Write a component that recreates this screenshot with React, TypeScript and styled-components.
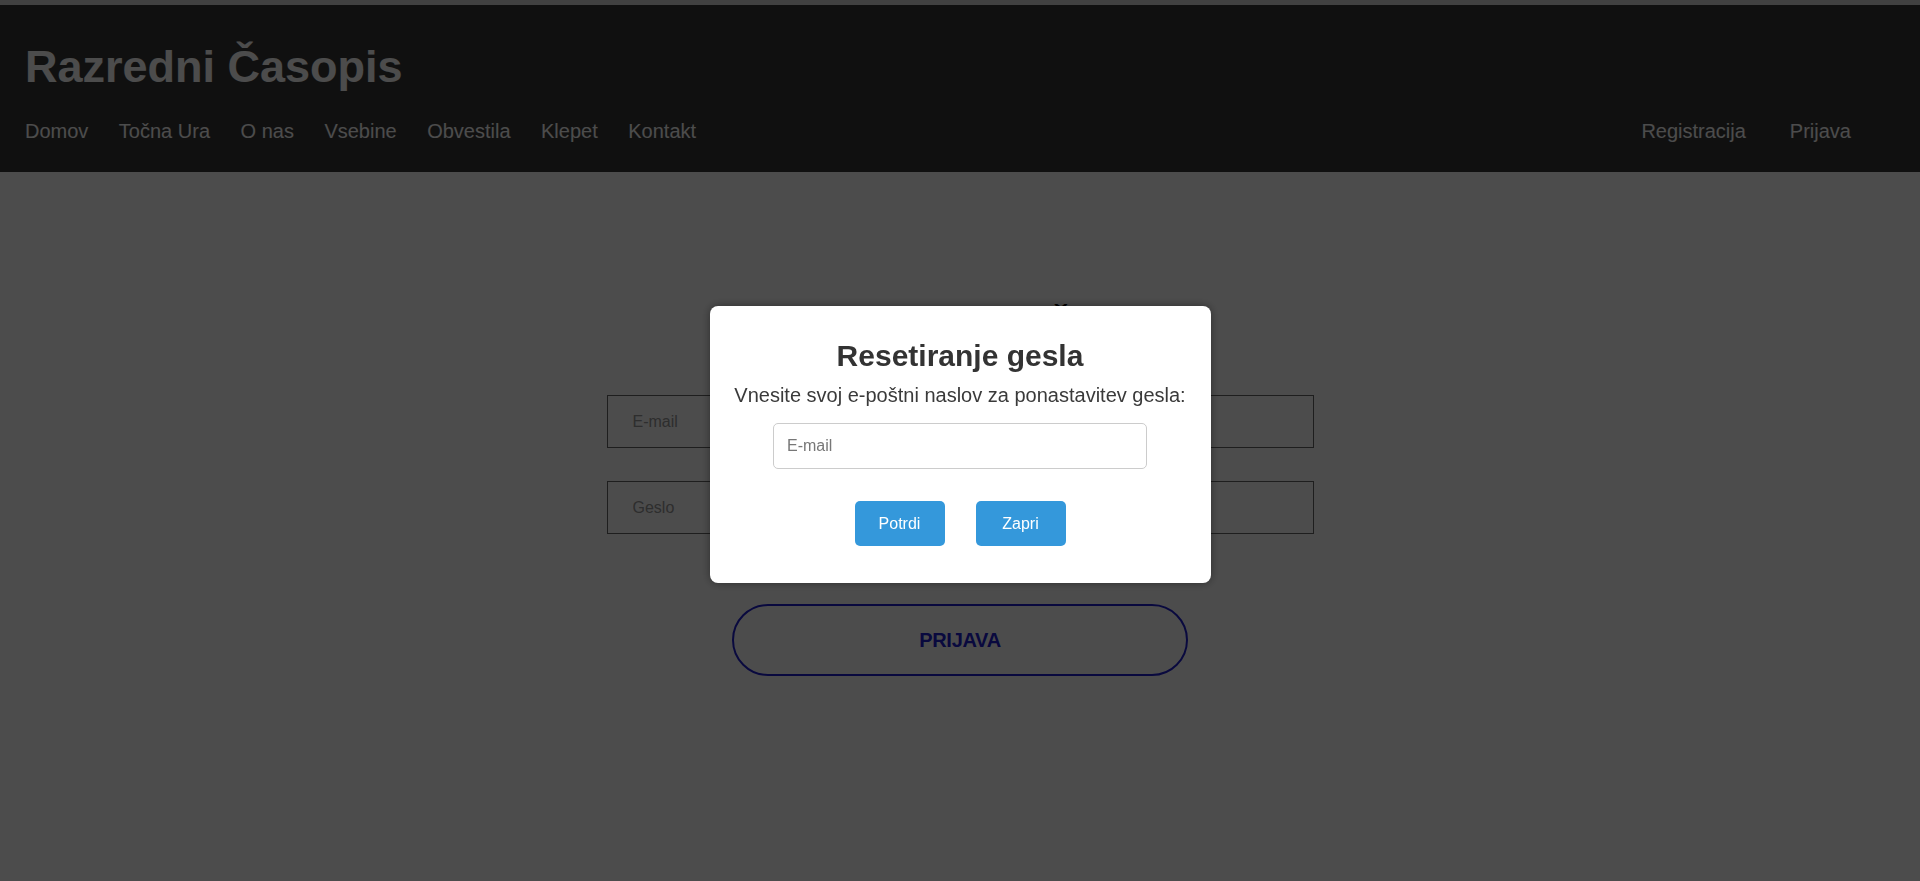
import React from "react";
import styled, { createGlobalStyle } from "styled-components";

const Global = createGlobalStyle`
  html, body { margin: 0; padding: 0; background: #ffffff; }
  body { font-family: "Liberation Sans", Arial, sans-serif; }
  * { box-sizing: border-box; }
`;

const Page = styled.div`
  min-height: 100vh;
  background: #ffffff;
`;

const Header = styled.header`
  background: #383838;
  border-top: 5px solid #d9d9d9;
  padding: 36px 69px 29px 25px;
`;

const SiteTitle = styled.h1`
  margin: 0 0 27px 0;
  font-size: 45px;
  line-height: 52px;
  font-weight: bold;
  color: #ffffff;
`;

const NavRow = styled.nav`
  display: flex;
  justify-content: space-between;
  align-items: center;
`;

const NavGroup = styled.div<{ $gap: number }>`
  display: flex;
  gap: ${(p) => p.$gap}px;
`;

const NavLink = styled.a`
  font-size: 20px;
  line-height: 23px;
  color: #ffffff;
  text-decoration: none;
`;

const Main = styled.main`
  padding-top: 138px;
  display: flex;
  flex-direction: column;
  align-items: center;
`;

const FormTitle = styled.h2`
  margin: 0 0 57px 0;
  font-size: 35px;
  line-height: 28px;
  font-weight: bold;
  color: #000000;
`;

const Form = styled.form`
  width: 707px;
  display: flex;
  flex-direction: column;
  align-items: center;
  gap: 33px;
`;

const FormInput = styled.input`
  width: 100%;
  height: 53px;
  border: 1px solid #666666;
  background: #ffffff;
  padding: 0 25px;
  font-family: "Liberation Sans", Arial, sans-serif;
  font-size: 16px;
  outline: none;
  &::placeholder { color: #999999; }
`;

const Forgot = styled.a`
  margin-top: 16px;
  font-size: 16px;
  line-height: 18px;
  color: #333333;
`;

const LoginButton = styled.button`
  margin-top: 36px;
  width: 456px;
  height: 72px;
  border: 2px solid #2020d0;
  border-radius: 36px;
  background: transparent;
  color: #2020d0;
  font-family: "Liberation Sans", Arial, sans-serif;
  font-size: 20px;
  font-weight: bold;
  letter-spacing: -0.3px;
`;

const Overlay = styled.div`
  position: fixed;
  inset: 0;
  background: rgba(0, 0, 0, 0.7);
  display: flex;
  align-items: center;
  justify-content: center;
  padding-top: 8px;
`;

const Modal = styled.div`
  width: 501px;
  background: #ffffff;
  border-radius: 8px;
  box-shadow: 0 0 10px rgba(0, 0, 0, 0.4);
  padding: 33px 20px 37px;
  display: flex;
  flex-direction: column;
  align-items: center;
  text-align: center;
`;

const ModalTitle = styled.h2`
  margin: 0;
  font-size: 30px;
  line-height: 34px;
  font-weight: bold;
  color: #333333;
`;

const ModalText = styled.p`
  margin: 11px 0 0 0;
  font-size: 20px;
  line-height: 23px;
  color: #3a3a3a;
  white-space: nowrap;
`;

const ModalInput = styled.input`
  margin-top: 16px;
  width: 374px;
  height: 46px;
  border: 1px solid #cccccc;
  border-radius: 5px;
  padding: 0 13px;
  font-family: "Liberation Sans", Arial, sans-serif;
  font-size: 16px;
  outline: none;
  &::placeholder { color: #777777; }
`;

const ButtonRow = styled.div`
  margin-top: 32px;
  display: flex;
  gap: 31px;
`;

const ModalButton = styled.button`
  width: 90px;
  height: 45px;
  border: none;
  border-radius: 5px;
  background: #3498db;
  color: #ffffff;
  font-family: "Liberation Sans", Arial, sans-serif;
  font-size: 16px;
`;

const leftLinks = ["Domov", "Točna Ura", "O nas", "Vsebine", "Obvestila", "Klepet", "Kontakt"];
const rightLinks = ["Registracija", "Prijava"];

export default function App() {
  return (
    <>
      <Global />
      <Page>
        <Header>
          <SiteTitle>Razredni Časopis</SiteTitle>
          <NavRow>
            <NavGroup $gap={30.5}>
              {leftLinks.map((l) => (
                <NavLink key={l} href="#">{l}</NavLink>
              ))}
            </NavGroup>
            <NavGroup $gap={44}>
              {rightLinks.map((l) => (
                <NavLink key={l} href="#">{l}</NavLink>
              ))}
            </NavGroup>
          </NavRow>
        </Header>
        <Main>
          <FormTitle>Prijava v Razredni Časopis</FormTitle>
          <Form onSubmit={(e) => e.preventDefault()}>
            <FormInput type="email" placeholder="E-mail" />
            <FormInput type="password" placeholder="Geslo" />
          </Form>
          <Forgot href="#">Pozabljeno geslo?</Forgot>
          <LoginButton type="button">PRIJAVA</LoginButton>
        </Main>
      </Page>
      <Overlay>
        <Modal>
          <ModalTitle>Resetiranje gesla</ModalTitle>
          <ModalText>Vnesite svoj e-poštni naslov za ponastavitev gesla:</ModalText>
          <ModalInput type="email" placeholder="E-mail" />
          <ButtonRow>
            <ModalButton type="button">Potrdi</ModalButton>
            <ModalButton type="button">Zapri</ModalButton>
          </ButtonRow>
        </Modal>
      </Overlay>
    </>
  );
}
